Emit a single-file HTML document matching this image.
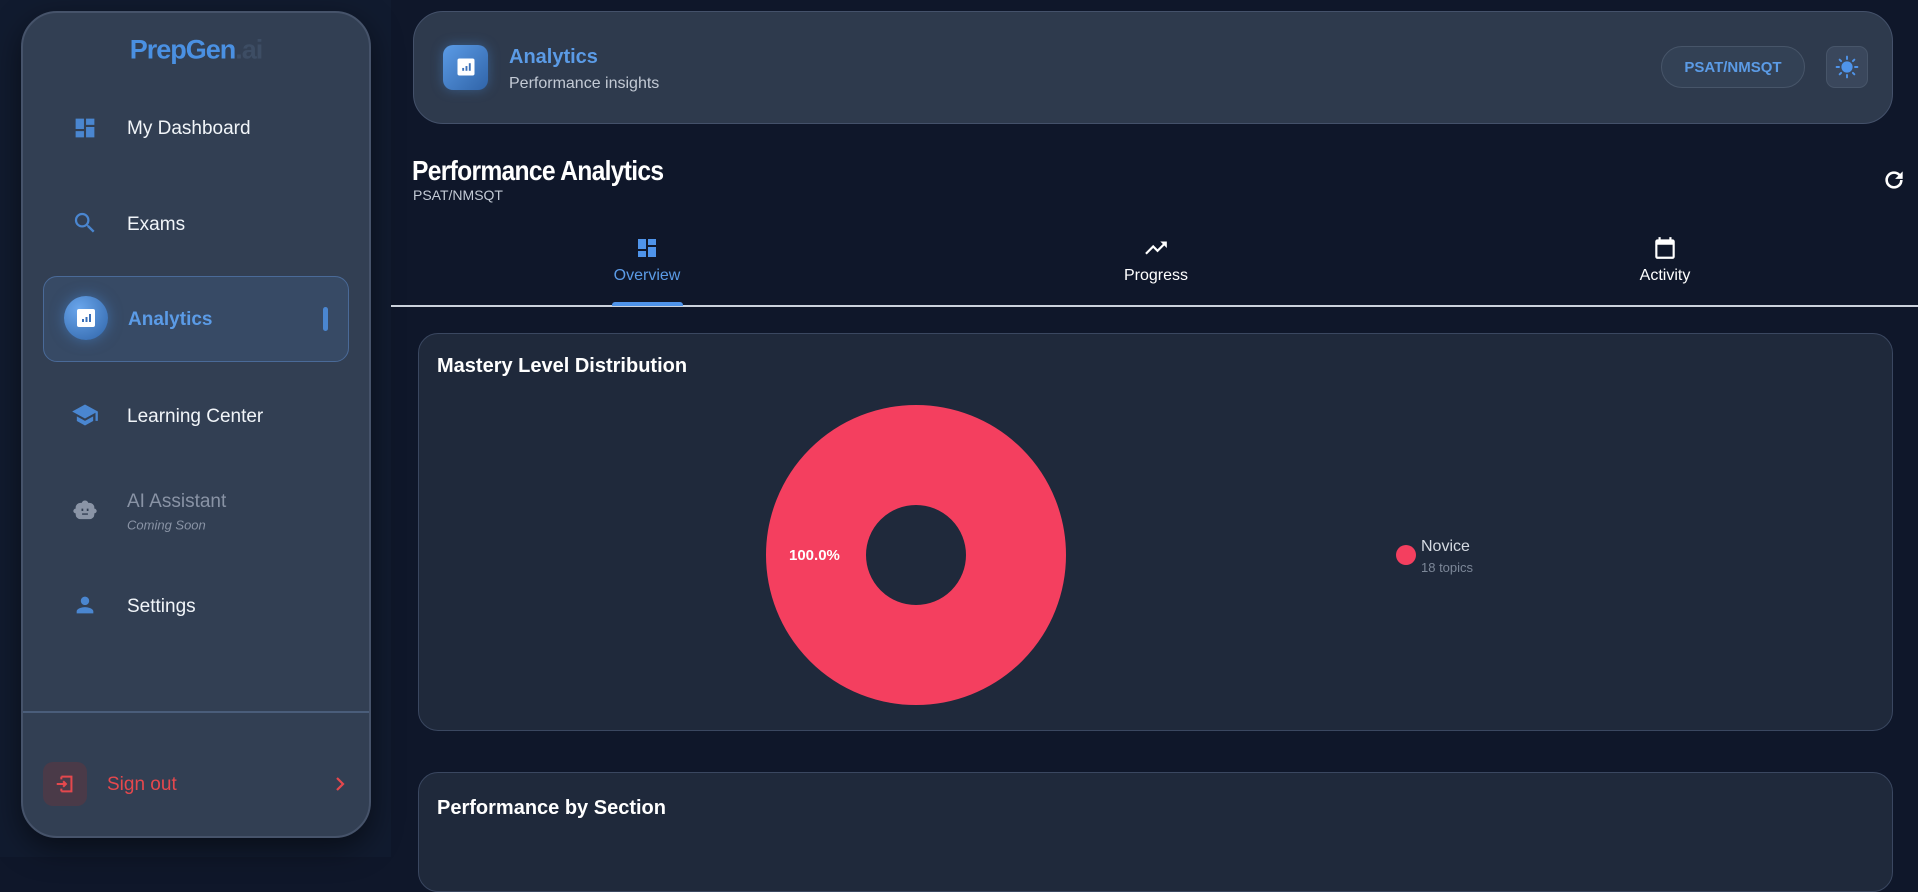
<!DOCTYPE html>
<html><head><meta charset="utf-8"><style>
*{box-sizing:border-box;margin:0;padding:0}
body{width:1918px;height:857px;overflow:hidden;background:#0f172a;font-family:"Liberation Sans",sans-serif;position:relative;color:#fff}
.abs{position:absolute}
.side{left:0;top:0;width:391px;height:857px;background:#111b2f}
.sc{left:21px;top:11px;width:350px;height:827px;background:#323f53;border:2px solid #46536a;border-radius:36px;box-shadow:0 10px 30px rgba(0,0,0,.5)}
.nav{position:absolute;left:127px;font-size:19px;color:#f1f5f9;transform:translateY(-50%)}
.ic{position:absolute;transform:translate(-50%,-50%)}
.hdr{left:413px;top:11px;width:1480px;height:113px;background:#2e3a4d;border:1.5px solid #44516a;border-radius:30px}
.card{left:418px;width:1475px;background:#1f293b;border:1.5px solid #3a4760;border-radius:20px}
.ct{position:absolute;left:18px;font-size:20px;font-weight:bold;color:#fff}
</style></head><body>
<div class="abs side"></div>
<div class="abs sc"></div>
<div class="abs" style="left:0;width:392px;top:50px;text-align:center;transform:translateY(-50%);font-size:27px;font-weight:bold;letter-spacing:-1px;color:#4a90e2">PrepGen<span style="color:#3d4d64">.ai</span></div>

<svg class="ic" style="left:85px;top:128px" width="25" height="25" viewBox="0 0 24 24"><path fill="#4a86d0" d="M3 13h8V3H3v10zm0 8h8v-6H3v6zm10 0h8V11h-8v10zm0-18v6h8V3h-8z"/></svg>
<div class="nav" style="top:129px">My Dashboard</div>
<svg class="ic" style="left:85px;top:223px" width="27" height="27" viewBox="0 0 24 24"><path fill="#4a86d0" d="M15.5 14h-.79l-.28-.27A6.47 6.47 0 0016 9.5 6.5 6.5 0 109.5 16c1.61 0 3.09-.59 4.23-1.57l.27.28v.79l5 4.99L20.49 19l-4.99-5zm-6 0C7.01 14 5 11.99 5 9.5S7.01 5 9.5 5 14 7.01 14 9.5 11.99 14 9.5 14z"/></svg>
<div class="nav" style="top:225px">Exams</div>

<div class="abs" style="left:43px;top:276px;width:306px;height:86px;border-radius:14px;background:#374a65;border:1.5px solid #4a6a98"></div>
<div class="abs" style="left:64px;top:296px;width:44px;height:44px;border-radius:50%;background:radial-gradient(circle at 35% 30%,#6aa6ec,#2f64a8);box-shadow:0 0 14px rgba(74,144,226,.5)"></div>
<svg class="ic" style="left:86px;top:318px" width="18" height="18" viewBox="0 0 18 18"><rect width="18" height="18" rx="2" fill="#fff"/><rect x="5" y="10" width="2" height="3" fill="#3a70b8"/><rect x="8.5" y="8" width="2" height="5" fill="#3a70b8"/><rect x="12" y="5" width="2" height="8" fill="#3a70b8"/></svg>
<div class="nav" style="top:320px;left:128px;color:#5b9be6;font-weight:bold">Analytics</div>
<div class="abs" style="left:323px;top:307px;width:5px;height:24px;border-radius:3px;background:#4a86d0"></div>

<svg class="ic" style="left:85px;top:415px" width="28" height="28" viewBox="0 0 24 24"><path fill="#4a86d0" d="M5 13.18v4L12 21l7-3.82v-4L12 17l-7-3.82zM12 3L1 9l11 6 9-4.91V17h2V9L12 3z"/></svg>
<div class="nav" style="top:417px">Learning Center</div>
<svg class="ic" style="left:85px;top:511px" width="28" height="28" viewBox="0 0 24 24"><path fill="#8a94a6" d="M12 3a3 3 0 00-2.8 2H8a4 4 0 00-4 4v1a2 2 0 000 4v1a4 4 0 004 4h8a4 4 0 004-4v-1a2 2 0 000-4V9a4 4 0 00-4-4h-1.2A3 3 0 0012 3zM9 10h1.5v2H9zm4.5 0H15v2h-1.5zM9.5 14h5v1.2h-5z"/></svg>
<div class="nav" style="top:502px;color:#8993a5">AI Assistant</div>
<div class="nav" style="top:525px;color:#8993a5;font-size:13px;font-style:italic">Coming Soon</div>
<svg class="ic" style="left:85px;top:605px" width="25" height="25" viewBox="0 0 24 24"><path fill="#4a86d0" d="M12 12c2.21 0 4-1.79 4-4s-1.79-4-4-4-4 1.79-4 4 1.79 4 4 4zm0 2c-2.67 0-8 1.34-8 4v2h16v-2c0-2.66-5.33-4-8-4z"/></svg>
<div class="nav" style="top:607px">Settings</div>

<div class="abs" style="left:23px;top:711px;width:346px;height:1.5px;background:#4a5d7a"></div>
<div class="abs" style="left:43px;top:762px;width:44px;height:44px;border-radius:10px;background:#4a3a48"></div>
<svg class="ic" style="left:65px;top:784px" width="22" height="22" viewBox="0 0 24 24" fill="none" stroke="#e5484d" stroke-width="2.2"><path d="M8 4h11v16H8M8 4v3M8 20v-3M3 12h10M10 9l3 3-3 3"/></svg>
<div class="nav" style="top:785px;left:107px;color:#e5484d">Sign out</div>
<svg class="ic" style="left:340px;top:784px" width="16" height="18" viewBox="0 0 16 18" fill="none" stroke="#e5484d" stroke-width="2.2"><path d="M5 3l6 6-6 6"/></svg>

<div class="abs hdr"></div>
<div class="abs" style="left:443px;top:45px;width:45px;height:45px;border-radius:10px;background:linear-gradient(135deg,#5b9be6,#3064a8);box-shadow:0 0 12px rgba(74,144,226,.4)"></div>
<svg class="ic" style="left:466px;top:67px" width="17" height="17" viewBox="0 0 18 18"><rect width="18" height="18" rx="2" fill="#fff"/><rect x="5" y="10" width="2" height="3" fill="#3a70b8"/><rect x="8.5" y="8" width="2" height="5" fill="#3a70b8"/><rect x="12" y="5" width="2" height="8" fill="#3a70b8"/></svg>
<div class="abs" style="left:509px;top:46px;font-size:20px;font-weight:bold;color:#5b9be6">Analytics</div>
<div class="abs" style="left:509px;top:75px;font-size:16px;color:#c3cad5">Performance insights</div>
<div class="abs" style="left:1661px;top:46px;width:144px;height:42px;border-radius:21px;border:1.5px solid #475569;background:#334155;text-align:center;line-height:41px;font-size:15px;font-weight:bold;color:#5b9be6">PSAT/NMSQT</div>
<div class="abs" style="left:1826px;top:46px;width:42px;height:42px;border-radius:9px;border:1.5px solid #475569;background:#3a475c"></div>
<svg class="ic" style="left:1847px;top:67px" width="24" height="24" viewBox="0 0 30 30"><circle cx="15" cy="15" r="7" fill="#4f94ea"/><g stroke="#4f94ea" stroke-width="2.4" stroke-linecap="round"><path d="M15 2v3M15 25v3M2 15h3M25 15h3M5.8 5.8l1.8 1.8M22.4 22.4l1.8 1.8M5.8 24.2l1.8-1.8M22.4 7.6l1.8-1.8"/></g></svg>

<div class="abs" style="left:412px;top:155px;font-size:28px;font-weight:bold;letter-spacing:-.8px;transform:scaleX(.88);transform-origin:left top">Performance Analytics</div>
<div class="abs" style="left:413px;top:187px;font-size:14px;color:#c3cad5">PSAT/NMSQT</div>
<svg class="ic" style="left:1894px;top:180px" width="26" height="26" viewBox="0 0 24 24"><path fill="#fff" d="M17.65 6.35A7.96 7.96 0 0012 4a8 8 0 108 8h-2.4A5.6 5.6 0 1112 6.4c1.55 0 2.95.64 3.96 1.64L13 11h7V4l-2.35 2.35z"/></svg>

<svg class="ic" style="left:647px;top:248px" width="24" height="24" viewBox="0 0 24 24"><path fill="#4f94ea" d="M3 13h8V3H3v10zm0 8h8v-6H3v6zm10 0h8V11h-8v10zm0-18v6h8V3h-8z"/></svg>
<div class="abs" style="left:547px;width:200px;text-align:center;top:267px;font-size:16px;color:#5b9be6">Overview</div>
<svg class="ic" style="left:1156px;top:248px" width="26" height="26" viewBox="0 0 24 24"><path fill="#fff" d="M16 6l2.29 2.29-4.88 4.88-4-4L2 16.59 3.41 18l6-6 4 4 6.3-6.29L22 12V6z"/></svg>
<div class="abs" style="left:1056px;width:200px;text-align:center;top:267px;font-size:16px">Progress</div>
<svg class="ic" style="left:1665px;top:248px" width="26" height="26" viewBox="0 0 24 24"><path fill="#fff" d="M19 4h-1V2h-2v2H8V2H6v2H5a2 2 0 00-2 2v14a2 2 0 002 2h14a2 2 0 002-2V6a2 2 0 00-2-2zm0 16H5V9h14v11z"/></svg>
<div class="abs" style="left:1565px;width:200px;text-align:center;top:267px;font-size:16px">Activity</div>
<div class="abs" style="left:391px;top:305px;width:1527px;height:2px;background:#cbd2dc"></div>
<div class="abs" style="left:612px;top:302px;width:71px;height:4px;border-radius:3px 3px 0 0;background:#4f94ea"></div>

<div class="abs card" style="top:333px;height:398px">
<div class="ct" style="top:21px">Mastery Level Distribution</div>
</div>
<svg class="abs" style="left:766px;top:405px" width="300" height="300" viewBox="0 0 300 300"><circle cx="150" cy="150" r="100" fill="none" stroke="#f43f5f" stroke-width="100"/></svg>
<div class="abs" style="left:789px;top:547px;font-size:15px;font-weight:bold">100.0%</div>
<div class="abs" style="left:1396px;top:545px;width:20px;height:20px;border-radius:50%;background:#f43f5f"></div>
<div class="abs" style="left:1421px;top:538px;font-size:16px;color:#d5dae2">Novice</div>
<div class="abs" style="left:1421px;top:560px;font-size:13px;color:#7c8798">18 topics</div>

<div class="abs card" style="top:772px;height:120px">
<div class="ct" style="top:24px">Performance by Section</div>
</div>
</body></html>
